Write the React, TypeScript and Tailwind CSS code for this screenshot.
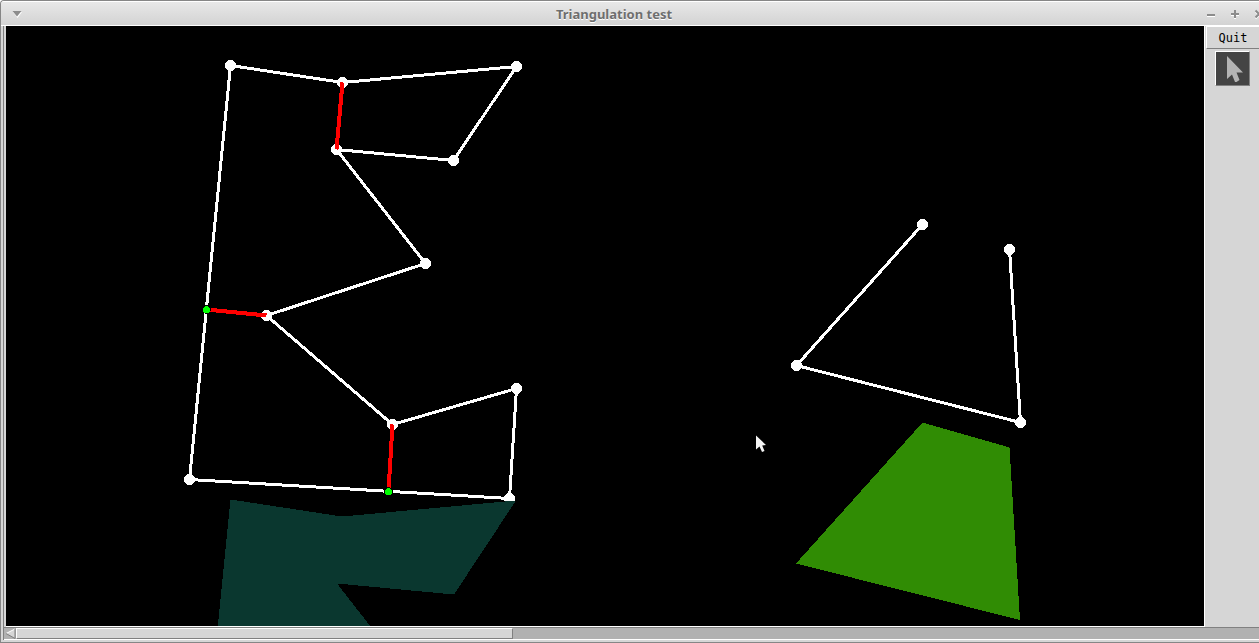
import React from "react";

type Point = [number, number];

const letterOutline: Point[] = [
  [230, 65], [342, 82], [516, 66], [453, 160], [336, 149], [425, 263],
  [266, 315], [392, 424], [516, 388], [509, 498], [189, 479],
];
const openOutline: Point[] = [[922, 224], [796, 365], [1020, 422], [1009, 249]];
const cuts: [Point, Point][] = [
  [[342, 82], [336, 149]],
  [[206, 309], [266, 315]],
  [[392, 424], [388, 491]],
];
const steinerPoints: Point[] = [[206, 309], [388, 491]];

const toPoints = (list: Point[]) =>
  list.map(([x, y]) => `${x + 0.5},${y + 0.5}`).join(" ");

function Canvas() {
  return (
    <svg
      className="block h-full w-full"
      viewBox="6 26 1198 600"
      preserveAspectRatio="xMinYMin slice"
      shapeRendering="crispEdges"
      role="img"
      aria-label="Polygon outlines and filled polygons"
    >
      <g fill="none" stroke="#fff" strokeWidth="3">
        <polygon points={toPoints(letterOutline)} strokeLinejoin="round" />
        <polyline points={toPoints(openOutline)} strokeLinejoin="round" />
      </g>
      {[...letterOutline, ...openOutline].map(([x, y]) => (
        <circle key={`${x}-${y}`} cx={x + 0.5} cy={y + 0.5} r="5.5" fill="#fff" />
      ))}
      {cuts.map(([a, b]) => (
        <line
          key={`${a[0]}-${b[0]}`}
          x1={a[0] + 0.5}
          y1={a[1] + 0.5}
          x2={b[0] + 0.5}
          y2={b[1] + 0.5}
          stroke="#f00"
          strokeWidth="4"
        />
      ))}
      {steinerPoints.map(([x, y]) => (
        <g key={x}>
          <circle cx={x + 0.5} cy={y + 0.5} r="4.5" fill="#000" />
          <circle cx={x + 0.5} cy={y + 0.5} r="3.5" fill="#0f0" />
        </g>
      ))}
      <rect x="180" y="501" width="345" height="125" fill="#000" />
      <polygon
        fill="#0a372f"
        points="230.500,499.500 342,516.500 516,500.500 454,594.500 337,583.500 426,697.500 267,749 393,858 517,822 510,932 189,914"
      />
      <polygon fill="#308c04" points="922.500,422.500 1009.500,447.500 1020,620 796,563.500" />
      <path
        shapeRendering="auto"
        fill="#f4f4f4"
        d="M756 435.500V449.500L759.500 446.500L762 452L764.500 451L762.200 445.500L766 445Z"
      />
    </svg>
  );
}

export default function App() {
  return (
    <div
      className="flex h-screen flex-col overflow-hidden rounded-tl border-t border-b border-l border-[#868686] bg-[#d6d6d6]"
    >
      <header className="flex h-[25px] shrink-0 items-center overflow-hidden border-y border-white bg-linear-to-b from-[#e8e8e8] to-[#d3d3d3]">
        <button type="button" aria-label="Window menu" className="flex w-8 shrink-0 justify-center">
          <svg width="10" height="8" viewBox="0 0 10 8">
            <path d="M1 2H10L5.500 8Z" fill="#fff" />
            <path d="M0.500 1H9.500L5 6.500Z" fill="#8c8c8c" />
          </svg>
        </button>
        <h1
          className="flex-1 text-center text-[13px] leading-5 font-bold text-[#6e6e6e] [text-shadow:0_1px_0_#fff]"
          style={{ fontFamily: '"Noto Sans", "Open Sans", sans-serif' }}
        >
          Triangulation test
        </h1>
        <div className="flex w-16 shrink-0 gap-3 overflow-hidden pl-2.5">
          {[
            { label: "Minimize", d: "M2 7H10" },
            { label: "Maximize", d: "M2 6H10M6 2V10" },
            { label: "Close", d: "M2.500 2.500L9.500 9.500M9.500 2.500L2.500 9.500" },
          ].map(({ label, d }) => (
            <button key={label} type="button" aria-label={label} className="shrink-0">
              <svg width="12" height="12" viewBox="0 0 12 12" fill="none" strokeWidth="2">
                <path d={d} stroke="#fff" transform="translate(0 1)" />
                <path d={d} stroke="#8c8c8c" />
              </svg>
            </button>
          ))}
        </div>
      </header>

      <div className="ml-0.5 flex min-h-0 flex-1 flex-col border-l border-[#808080]">
        <div className="flex min-h-0 flex-1">
          <main className="ml-0.5 min-w-0 flex-1 overflow-hidden border-r border-b border-white bg-black">
            <Canvas />
          </main>
          <aside className="flex w-[54px] shrink-0 flex-col items-center pl-px">
            <button
              type="button"
              className="h-[23px] w-full border-t border-b border-l border-t-white border-b-[#808080] border-l-white text-center text-xs leading-5 text-black"
              style={{ fontFamily: '"DejaVu Sans Mono", "Liberation Mono", monospace' }}
            >
              Quit
            </button>
            <button
              type="button"
              aria-label="Select"
              className="mt-0.5 flex size-[35px] shrink-0 items-center justify-center border border-t-white border-r-[#808080] border-b-[#808080] border-l-white bg-[#444]"
            >
              <svg width="33" height="33" viewBox="0 0 33 33">
                <path d="M11 4V27L16 22.500L19 30H20.500L23.500 28L20.500 20.500H27Z" fill="#b4b4b4" />
              </svg>
            </button>
          </aside>
        </div>
        <div
          role="scrollbar"
          aria-label="Horizontal scroll"
          aria-controls="root"
          aria-valuenow={0}
          className="flex h-[13px] shrink-0 border-t border-b border-t-[#808080] border-b-white bg-[#b1b1b1]"
        >
          <button type="button" aria-label="Scroll left" className="ml-0.5 w-2.5 shrink-0">
            <svg width="10" height="11" viewBox="0 0 10 11">
              <path d="M0 5.500L9 1V10Z" fill="#d6d6d6" />
              <path d="M0 5.500L9 1" stroke="#fff" />
              <path d="M0 5.500L9 10.500V1" fill="none" stroke="#808080" />
            </svg>
          </button>
          <div className="min-w-0 flex-1">
            <div className="h-full w-[40%] border border-t-white border-r-[#808080] border-b-[#808080] border-l-white bg-[#d6d6d6]" />
          </div>
        </div>
      </div>
      <div className="h-0.5 shrink-0" />
    </div>
  );
}
